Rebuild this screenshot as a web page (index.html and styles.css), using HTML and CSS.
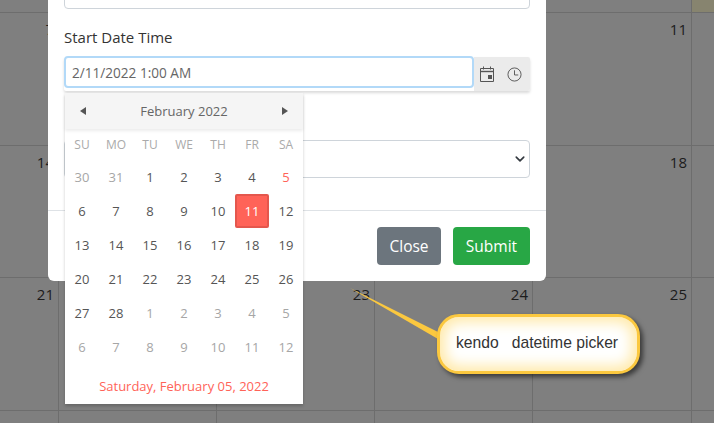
FILE: index.html
```html
<!DOCTYPE html>
<html lang="en">
<head>
  <meta charset="UTF-8">
  <title>Event calendar</title>
  <link rel="stylesheet" href="styles.css">
</head>
<body>
  <div class="month">
    <div class="cell"></div><div class="cell"></div><div class="cell"></div><div class="cell"></div><div class="cell"></div><div class="cell today"></div>
    <div class="cell">7</div><div class="cell">8</div><div class="cell">9</div><div class="cell">10</div><div class="cell">11</div><div class="cell"></div>
    <div class="cell">14</div><div class="cell">15</div><div class="cell">16</div><div class="cell">17</div><div class="cell">18</div><div class="cell"></div>
    <div class="cell">21</div><div class="cell">22</div><div class="cell">23</div><div class="cell">24</div><div class="cell">25</div><div class="cell"></div>
    <div class="cell">30</div><div class="cell">1</div><div class="cell">2</div><div class="cell">3</div><div class="cell">4</div><div class="cell"></div>
  </div>

  <div class="modal">
    <div class="modal-body">
      <input class="form-control" type="text" value="">
      <label class="field-label">Start Date Time</label>
      <div class="picker">
        <input class="picker-input" type="text" value="2/11/2022 1:00 AM">
        <div class="picker-btns">
          <svg class="icon" viewBox="0 0 16 16" width="16" height="16" fill="none" stroke="#555" stroke-width="1">
            <path d="M1.5 2.5h13v13h-13z"/>
            <path d="M1.5 5.5h13" stroke-width="1.4"/>
            <path d="M4.5 0.5v3M11.5 0.5v3"/>
            <rect x="9" y="9" width="4" height="4" fill="#555" stroke="none"/>
          </svg>
          <svg class="icon" viewBox="0 0 16 16" width="15" height="15" fill="none" stroke="#555" stroke-width="1">
            <circle cx="8" cy="8" r="7"/>
            <path d="M8 3.5V8.5H12"/>
          </svg>
        </div>
      </div>
      <select class="form-select"><option></option></select>
    </div>
    <div class="modal-footer">
      <button class="btn btn-close">Close</button>
      <button class="btn btn-submit">Submit</button>
    </div>
  </div>

  <div class="popup">
    <div class="popup-head">
      <svg width="6" height="8" viewBox="0 0 6 8"><path d="M6 0V8L0 4z" fill="#555"/></svg>
      <span>February 2022</span>
      <svg width="6" height="8" viewBox="0 0 6 8"><path d="M0 0V8L6 4z" fill="#555"/></svg>
    </div>
    <div class="days">
      <span class="dow">SU</span><span class="dow">MO</span><span class="dow">TU</span><span class="dow">WE</span><span class="dow">TH</span><span class="dow">FR</span><span class="dow">SA</span>
      <span class="off">30</span><span class="off">31</span><span>1</span><span>2</span><span>3</span><span>4</span><span class="now">5</span>
      <span>6</span><span>7</span><span>8</span><span>9</span><span>10</span><span class="picked">11</span><span>12</span>
      <span>13</span><span>14</span><span>15</span><span>16</span><span>17</span><span>18</span><span>19</span>
      <span>20</span><span>21</span><span>22</span><span>23</span><span>24</span><span>25</span><span>26</span>
      <span>27</span><span>28</span><span class="off">1</span><span class="off">2</span><span class="off">3</span><span class="off">4</span><span class="off">5</span>
      <span class="off">6</span><span class="off">7</span><span class="off">8</span><span class="off">9</span><span class="off">10</span><span class="off">11</span><span class="off">12</span>
    </div>
    <div class="popup-foot">Saturday, February 05, 2022</div>
  </div>

  <svg class="pointer" width="100" height="60" viewBox="0 0 100 60">
    <path d="M0 0L88 44L88 51z" fill="#fbc83f"/>
  </svg>
  <div class="callout">kendo &nbsp; datetime picker</div>
</body>
</html>
```

FILE: styles.css
```css
* {
  box-sizing: border-box;
}

html, body {
  height: 100%;
}

body {
  margin: 0;
  position: relative;
  overflow: hidden;
  background: #7f7f7f;
  font-family: "Open Sans", sans-serif;
  color: #212529;
}

/* month behind the dialog */
.month {
  display: grid;
  grid-template-columns: repeat(4, 158px) 159px 158px;
  grid-auto-rows: 132.6px;
  margin: -119.6px 0 0 -99px;
  width: 950px;
}

.cell {
  border-right: 1px solid #6d6d6d;
  border-bottom: 1px solid #6d6d6d;
  padding: 4px 4px 0 0;
  text-align: right;
  font-size: 15px;
  line-height: 24px;
  color: #1c1c1c;
}

.today {
  background: #87846f;
}

/* dialog */
.modal {
  position: absolute;
  left: 48px;
  top: -60px;
  width: 498px;
  background: #fff;
  border-radius: 0 0 6px 6px;
}

.modal-body {
  padding: 31px 16px 32px;
}

.form-control {
  display: block;
  width: 100%;
  height: 38px;
  border: 1px solid #ced4da;
  border-radius: 4px;
}

.field-label {
  display: block;
  margin-top: 16px;
  font-size: 15px;
  line-height: 24px;
  color: #333;
}

.picker {
  display: flex;
  height: 34px;
  margin-top: 8px;
  box-shadow: 0 2px 3px rgba(0, 0, 0, 0.15);
  border-radius: 2px;
}

.picker-input {
  flex: 1;
  min-width: 0;
  height: 32px;
  margin-top: -1px;
  padding: 0 6px;
  border: 2px solid #b2d9f8;
  border-radius: 4px;
  outline: none;
  font-family: inherit;
  font-size: 13.6px;
  color: #666;
}

.picker-btns {
  width: 56px;
  display: flex;
  align-items: center;
  gap: 12px;
  padding: 0 0 0 5px;
  background: #ebebeb;
  border-radius: 0 2px 2px 0;
}

.form-select {
  display: block;
  width: 100%;
  height: 38px;
  margin-top: 49px;
  border: 1px solid #ced4da;
  border-radius: 4px;
  background: #fff url("data:image/svg+xml,%3Csvg xmlns='http://www.w3.org/2000/svg' viewBox='0 0 16 16'%3E%3Cpath fill='none' stroke='%23343a40' stroke-linecap='round' stroke-linejoin='round' stroke-width='2.6' d='M2 5l6 6 6-6'/%3E%3C/svg%3E") no-repeat right 4.5px center / 10px 10px;
  appearance: none;
}

.modal-footer {
  display: flex;
  justify-content: flex-end;
  gap: 12px;
  padding: 16px;
  border-top: 1px solid #dee2e6;
}

.btn {
  height: 38px;
  padding: 0 12px;
  border: none;
  border-radius: 4px;
  font-family: inherit;
  font-size: 15.5px;
  color: #fff;
}

.btn-close {
  width: 64px;
  background: #6c757d;
}

.btn-submit {
  width: 77px;
  background: #28a745;
}

/* date popup */
.popup {
  position: absolute;
  left: 65px;
  top: 93px;
  width: 238px;
  height: 311px;
  background: #fff;
  box-shadow: 0 2px 3px rgba(0, 0, 0, 0.2);
  font-size: 13px;
}

.popup-head {
  display: flex;
  align-items: center;
  justify-content: space-between;
  height: 36px;
  padding: 0 15px;
  background: #f5f5f5;
  box-shadow: 0 2px 3px rgba(0, 0, 0, 0.08);
  color: #666;
}

.days {
  display: grid;
  grid-template-columns: repeat(7, 34px);
  grid-template-rows: 31px;
  grid-auto-rows: 34px;
  color: #555;
}

.days span {
  display: flex;
  align-items: center;
  justify-content: center;
}

.days .dow {
  font-size: 12px;
  color: #aaa;
}

.days .off {
  color: #a6a6a6;
}

.days .now {
  color: #ff6358;
}

.days .picked {
  background: #ff6358;
  border: 2px solid #e4574d;
  border-radius: 2px;
  color: #fff;
}

.popup-foot {
  margin-top: 10px;
  text-align: center;
  line-height: 24px;
  color: #ff6358;
}

/* annotation */
.pointer {
  position: absolute;
  left: 350px;
  top: 288px;
}

.callout {
  position: absolute;
  left: 437px;
  top: 314px;
  width: 203px;
  height: 60px;
  display: flex;
  align-items: center;
  justify-content: center;
  padding: 0 3px 2px 0;
  border: 3px solid #fbc83f;
  border-radius: 22px;
  background: #fff;
  box-shadow: inset 0 0 14px 5px #ffe9a8, 3px 3px 5px rgba(0, 0, 0, 0.55);
  font-family: "Liberation Sans", sans-serif;
  font-size: 15.7px;
  color: #333;
}
```
